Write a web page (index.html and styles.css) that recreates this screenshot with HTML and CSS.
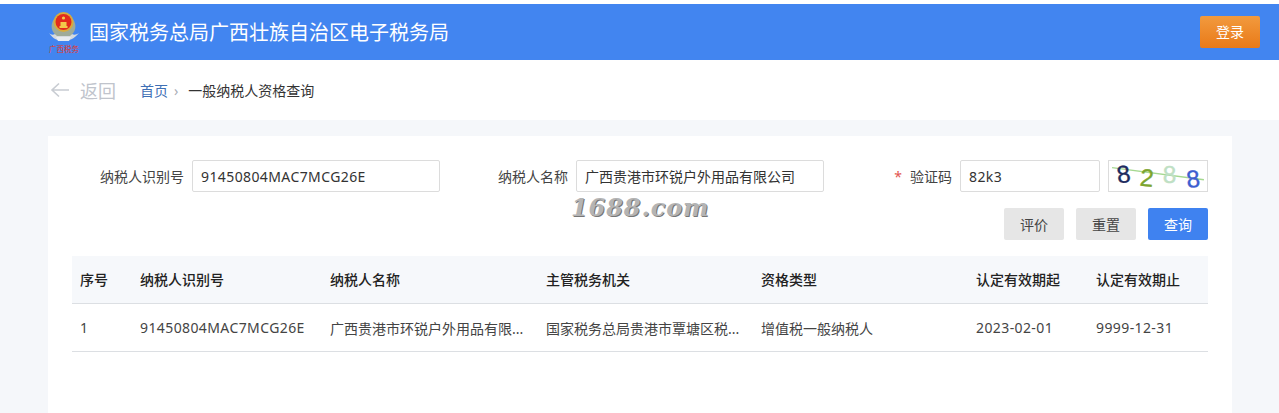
FILE: index.html
```html
<!DOCTYPE html>
<html lang="zh-CN">
<head>
    <meta charset="UTF-8">
    <meta name="viewport" content="width=device-width, initial-scale=1.0">
    <title>一般纳税人资格查询</title>

    <link rel="stylesheet" href="styles.css">
</head>
<body>

    <header class="topbar">
        <div class="brand">
            <svg class="emblem" width="32" height="44" viewBox="0 0 32 44">
                <path d="M1 23 C5 29 10 31 15.500 31 C21 31 26 29 31 23 C28 25 26 25 24 24 L25 13 C27 19 23 25 15.500 25 C8 25 4 19 6 13 L7 24 C5 25 3 25 1 23 Z" fill="#d5dade"/>
                <path d="M6 9 C2 15 3 22 9 26 L22 26 C28 22 29 15 25 9 Z" fill="#9fab98"/>
                <circle cx="15.500" cy="12" r="10" fill="#d9ab3c"/>
                <circle cx="15.500" cy="12" r="8" fill="#e32a1c"/>
                <path d="M11.500 16 h8 v2 h-8 Z M12.500 12 h6 v4 h-6 Z" fill="#f3c94a"/>
                <circle cx="15.500" cy="8" r="1.600" fill="#f3c94a"/>
                <path d="M8 27 h15 l-2 4 h-11 Z" fill="#e8ebee"/>
                <text class="emblem-text" x="16" y="42" text-anchor="middle">广西税务</text>
            </svg>
            <h1 class="site-title">国家税务总局广西壮族自治区电子税务局</h1>
        </div>
        <button type="button" class="btn-login">登录</button>
    </header>

    <nav class="crumbbar">
        <a class="back-link">
            <svg width="20" height="16" viewBox="0 0 20 16">
                <path d="M19 8 H2 M9 1.500 L2 8 L9 14.500" fill="none" stroke="#c8ccd2" stroke-width="1.600"/>
            </svg>
            <span>返回</span>
        </a>
        <a class="crumb-home">首页</a>
        <span class="crumb-sep">›</span>
        <span class="crumb-current">一般纳税人资格查询</span>
    </nav>

    <main class="content">
        <section class="card">
            <span class="watermark">1688.com</span>

            <form class="search-form">
                <div class="form-group">
                    <label for="nsrsbh">纳税人识别号</label>
                    <input type="text" id="nsrsbh" class="latin" value="91450804MAC7MCG26E">
                </div>
                <div class="form-group">
                    <label for="nsrmc">纳税人名称</label>
                    <input type="text" id="nsrmc" value="广西贵港市环锐户外用品有限公司">
                </div>
                <div class="form-group">
                    <label for="yzm"><em class="required">*</em>验证码</label>
                    <input type="text" id="yzm" class="input-code latin" value="82k3">
                    <svg class="captcha" width="100" height="32" viewBox="0 0 100 32">
                        <path d="M1 7 L99 20" stroke="#a5d890" stroke-width="1.400"/>
                        <text class="cap cap-navy" x="6" y="23" transform="rotate(-8 13 14)">8</text>
                        <text class="cap cap-green" x="31" y="27" transform="rotate(6 38 18)">2</text>
                        <text class="cap cap-pale" x="55" y="23">8</text>
                        <text class="cap cap-blue" x="80" y="28" transform="rotate(-6 87 18)">8</text>
                    </svg>
                </div>
            </form>

            <div class="actions">
                <button type="button" class="btn">评价</button>
                <button type="button" class="btn">重置</button>
                <button type="button" class="btn btn-primary">查询</button>
            </div>

            <table class="result-table">
                <colgroup>
                    <col class="col-index">
                    <col class="col-id">
                    <col class="col-name">
                    <col class="col-office">
                    <col class="col-type">
                    <col class="col-date">
                    <col class="col-date">
                </colgroup>
                <thead>
                    <tr>
                        <th>序号</th>
                        <th>纳税人识别号</th>
                        <th>纳税人名称</th>
                        <th>主管税务机关</th>
                        <th>资格类型</th>
                        <th>认定有效期起</th>
                        <th>认定有效期止</th>
                    </tr>
                </thead>
                <tbody>
                    <tr>
                        <td>1</td>
                        <td class="latin">91450804MAC7MCG26E</td>
                        <td>广西贵港市环锐户外用品有限...</td>
                        <td>国家税务总局贵港市覃塘区税...</td>
                        <td>增值税一般纳税人</td>
                        <td class="latin">2023-02-01</td>
                        <td class="latin">9999-12-31</td>
                    </tr>
                </tbody>
            </table>
        </section>
    </main>

</body>
</html>
```

FILE: styles.css
```css
html,
body {
    height: 100%;
}

body {
    font-family: "Noto Sans", "Noto Sans CJK SC", sans-serif;
    font-size: 14px;
    color: #333;
    background-color: #f5f7fa;
    margin: 0;
    padding: 4px 0 0;
    box-sizing: border-box;
    overflow: hidden;
    display: flex;
    flex-direction: column;
    box-shadow: inset 0 4px 0 #fff;
}

.latin {
    letter-spacing: 0.4px;
}

.topbar {
    flex: none;
    height: 56px;
    padding: 0 19px 0 48px;
    background-color: #4285f0;
    display: flex;
    align-items: center;
    justify-content: space-between;
}

.brand {
    display: flex;
    align-items: center;
    gap: 9px;
}

.emblem {
    display: block;
}

.emblem-text {
    font-size: 7.5px;
    fill: #e2382a;
}

.site-title {
    margin: 2px 0 0;
    font-size: 20px;
    font-weight: 400;
    color: #fff;
    line-height: 28px;
}

.btn-login {
    width: 60px;
    height: 32px;
    border: none;
    border-radius: 2px;
    background: linear-gradient(#f29a3e, #e97a18);
    color: #fff;
    font: inherit;
    padding-bottom: 3px;
}

.crumbbar {
    flex: none;
    height: 60px;
    padding-left: 50px;
    background-color: #fff;
    display: flex;
    align-items: center;
}

.back-link {
    display: flex;
    align-items: center;
    gap: 10px;
    margin-right: 24px;
    font-size: 18px;
    color: #c0c4cc;
}

.crumb-home {
    color: #3f70b5;
}

.crumb-sep {
    margin: 0 10px 0 6px;
    color: #a8adb5;
}

.content {
    flex: 1;
    min-height: 0;
    padding: 16px 47px 0 48px;
}

.card {
    position: relative;
    height: 100%;
    padding: 24px;
    box-sizing: border-box;
    background-color: #fff;
}

.watermark {
    position: absolute;
    left: 523px;
    top: 57px;
    font-family: "DejaVu Serif", serif;
    font-size: 24px;
    font-weight: bold;
    font-style: italic;
    letter-spacing: 0.9px;
    color: #b4b4b4;
    text-shadow: 1px 1px 0 #777;
}

.search-form {
    display: grid;
    grid-template-columns: repeat(3, 368px);
    gap: 16px;
}

.form-group {
    display: flex;
    align-items: center;
}

.form-group label {
    width: 112px;
    margin-right: 8px;
    text-align: right;
    flex-shrink: 0;
    color: #444;
}

.required {
    font-style: normal;
    color: #e2554f;
    margin-right: 8px;
}

.form-group input {
    flex: 1;
    min-width: 0;
    height: 32px;
    padding: 0 8px;
    border: 1px solid #dcdcdc;
    border-radius: 2px;
    box-sizing: border-box;
    font: inherit;
    color: #333;
}

.form-group .input-code {
    flex: none;
    width: 140px;
    margin-right: 8px;
}

.captcha {
    flex: none;
    display: block;
    box-sizing: border-box;
    border: 1px solid #dcdcdc;
}

.cap {
    font-family: "Liberation Sans", sans-serif;
    font-size: 26px;
    stroke-width: 0.4;
}

.cap-navy {
    fill: #1d2b5e;
    stroke: #1d2b5e;
}

.cap-green {
    fill: #7da52e;
    stroke: #7da52e;
}

.cap-pale {
    fill: #bfe0c4;
    stroke: #bfe0c4;
}

.cap-blue {
    fill: #3d5fd0;
    stroke: #3d5fd0;
}

.actions {
    display: flex;
    justify-content: flex-end;
    gap: 12px;
    margin-top: 16px;
}

.btn {
    width: 60px;
    height: 32px;
    border: none;
    border-radius: 2px;
    background-color: #e6e6e6;
    color: #444;
    font: inherit;
}

.btn-primary {
    background-color: #3f82f0;
    color: #fff;
}

.result-table {
    width: 1136px;
    margin-top: 16px;
    border-collapse: collapse;
    table-layout: fixed;
}

.col-index {
    width: 60px;
}

.col-id {
    width: 190px;
}

.col-name {
    width: 216px;
}

.col-office,
.col-type {
    width: 215px;
}

.col-date {
    width: 120px;
}

.result-table th,
.result-table td {
    height: 47px;
    padding: 0 8px;
    text-align: left;
    white-space: nowrap;
    border-bottom: 1px solid #dcdfe3;
}

.result-table th {
    height: 45px;
    padding-bottom: 2px;
    background-color: #f6f8fb;
    font-weight: 500;
    color: #222;
}

.result-table td {
    color: #444;
}
```
